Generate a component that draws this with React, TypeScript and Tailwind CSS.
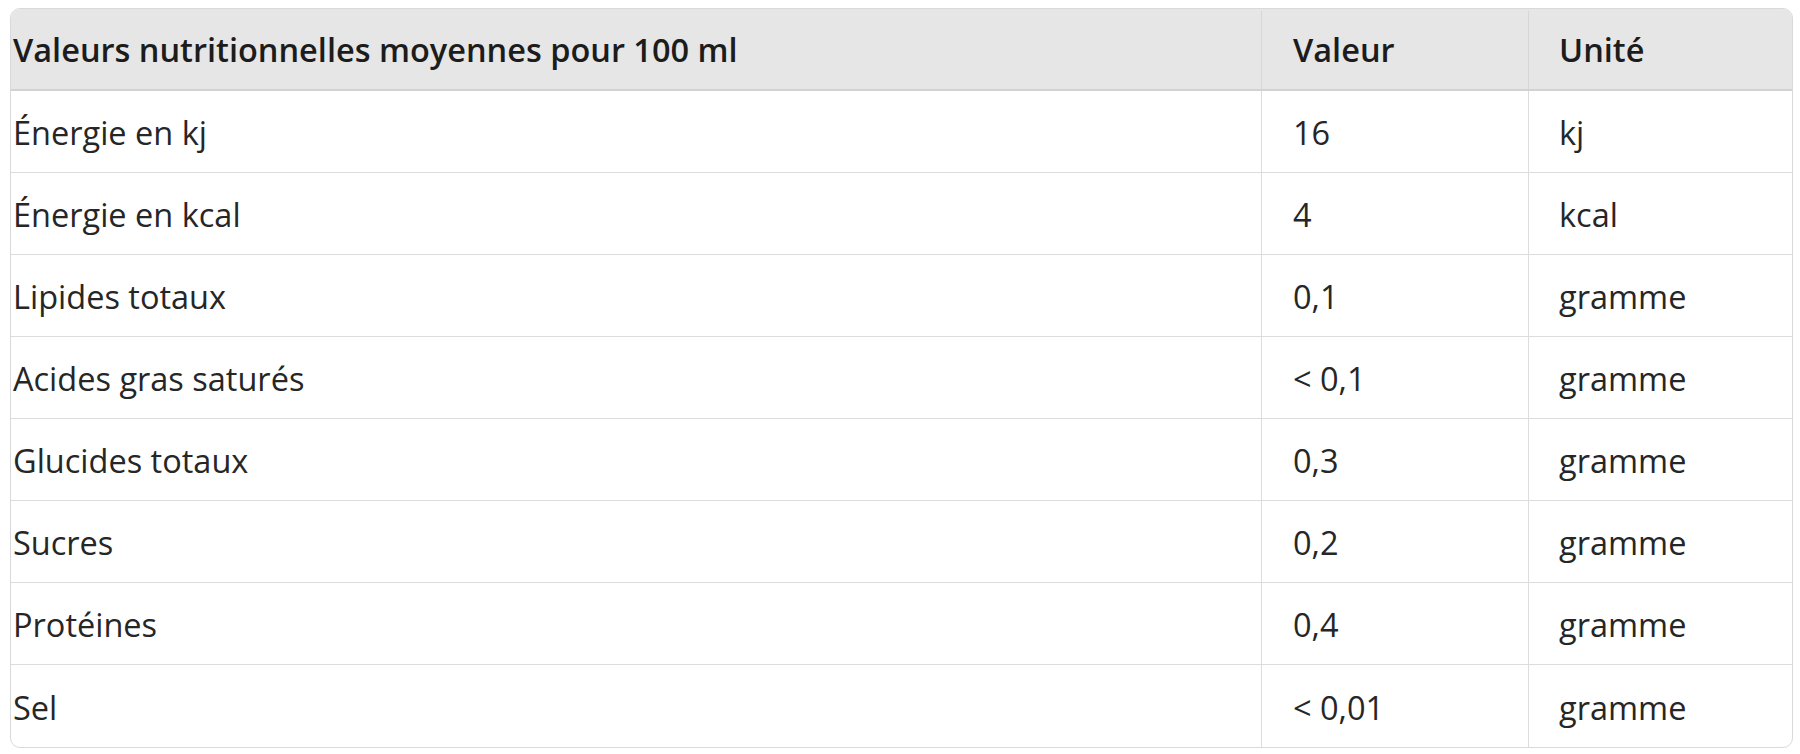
import React from "react";

const rows = [
  ["Énergie en kj", "16", "kj"],
  ["Énergie en kcal", "4", "kcal"],
  ["Lipides totaux", "0,1", "gramme"],
  ["Acides gras saturés", "< 0,1", "gramme"],
  ["Glucides totaux", "0,3", "gramme"],
  ["Sucres", "0,2", "gramme"],
  ["Protéines", "0,4", "gramme"],
  ["Sel", "< 0,01", "gramme"],
];

const App = () => {
  return (
    <div className="bg-white w-full min-h-screen pl-[10px] pt-[8px] font-['Open_Sans',sans-serif]">
      <div className="w-[1783px] rounded-[10px] border border-[#d9d9d9] overflow-hidden">
        {/* header */}
        <div className="grid grid-cols-[1250px_267px_1fr] h-[82px] bg-[#e6e6e6] border-b-2 border-[#d2d2d2] text-[32.5px] font-semibold text-[#1c1c1c] pt-[2px]">
          <div className="flex items-center pl-[2px]">Valeurs nutritionnelles moyennes pour 100 ml</div>
          <div className="flex items-center pl-[31px] border-l border-[#d6d6d6]">Valeur</div>
          <div className="flex items-center pl-[30px] border-l border-[#d6d6d6]">Unité</div>
        </div>
        {rows.map((r, i) => (
          <div
            key={i}
            className={`grid grid-cols-[1250px_267px_1fr] h-[82px] text-[32.5px] text-[#262626] ${
              i < rows.length - 1 ? "border-b border-[#dcdcdc]" : ""
            }`}
          >
            <div className="flex items-center pl-[2px] pt-[4px]">{r[0]}</div>
            <div className="flex items-center pl-[31px] pt-[4px] border-l border-[#dcdcdc]">{r[1]}</div>
            <div className="flex items-center pl-[30px] pt-[4px] border-l border-[#dcdcdc]">{r[2]}</div>
          </div>
        ))}
      </div>
    </div>
  );
};

export default App;
